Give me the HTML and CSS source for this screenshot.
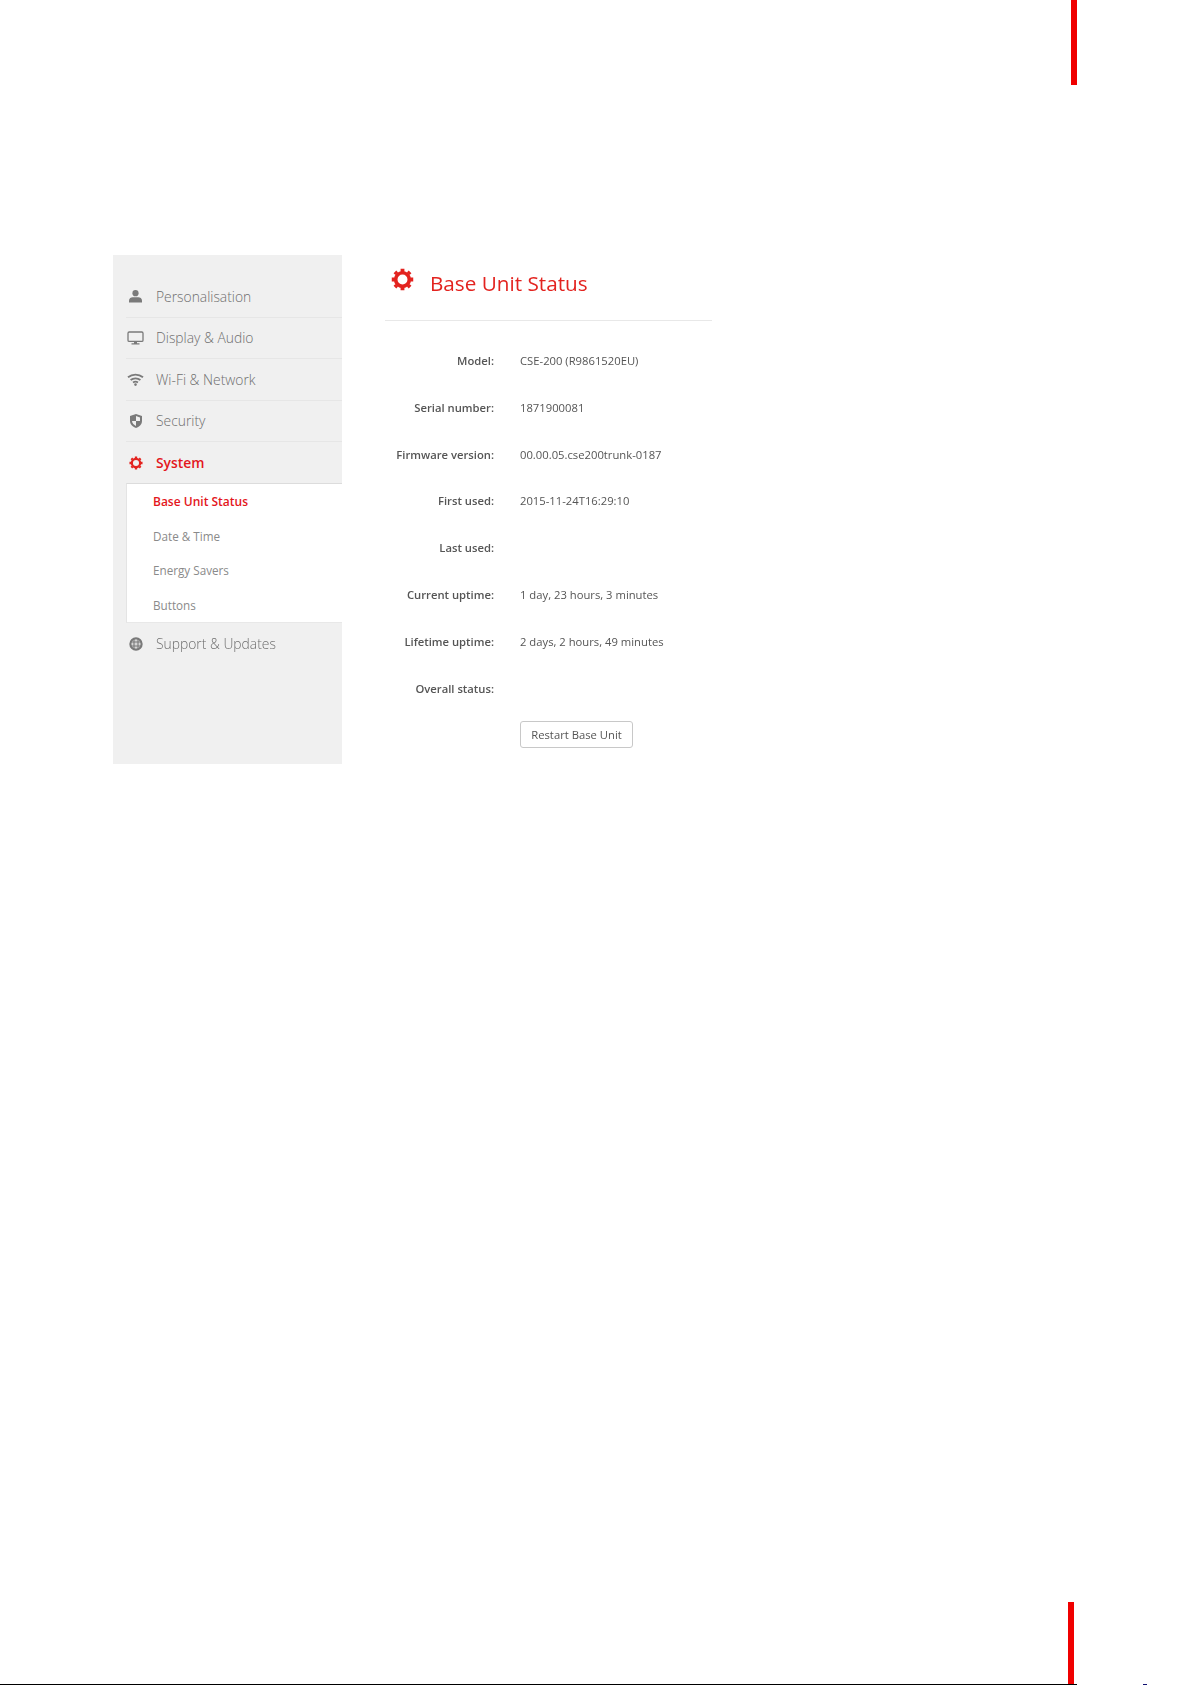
FILE: index.html
```html
<!DOCTYPE html>
<html lang="en">
<head>
<meta charset="utf-8">
<title>Base Unit Status</title>
<link rel="stylesheet" href="styles.css">
</head>
<body>
<div class="page">
  <div class="bar bar-top"></div>
  <div class="shot">
    <nav class="side">
      <a class="item">
        <span class="ico"><svg width="13" height="13" viewBox="0 0 13 13"><circle cx="6.5" cy="3.2" r="3.1"/><path d="M0 12.6V10.6C0 8.3 2 7.2 3.6 7.2H9.4C11 7.2 13 8.3 13 10.6V12.6Z"/></svg></span>
        Personalisation
      </a>
      <a class="item">
        <span class="ico"><svg width="17" height="14" viewBox="0 0 17 14"><rect class="line" x="1" y="1" width="15" height="9.4" rx="1.2"/><path d="M7 10.5H10V12.2H12.5V13.4H4.5V12.2H7Z"/></svg></span>
        Display &amp; Audio
      </a>
      <a class="item">
        <span class="ico"><svg width="17" height="13" viewBox="0 0 17 13"><path class="line wide" d="M1 4.3C5.3 .6 11.7 .6 16 4.3"/><path class="line wide" d="M3.6 7C6.4 4.7 10.6 4.7 13.4 7"/><path class="line wide" d="M6 9.5C7.5 8.5 9.5 8.5 11 9.5"/><circle cx="8.5" cy="11.6" r="1.3"/></svg></span>
        Wi-Fi &amp; Network
      </a>
      <a class="item">
        <span class="ico"><svg width="12" height="14" viewBox="0 0 12 14"><path d="M6 0L12 2V7C12 10.5 9 13 6 14C3 13 0 10.5 0 7V2Z"/><path class="fill-bg" d="M6 2V7H2C2 9.2 4 11 6 12V7H10V3.4Z"/></svg></span>
        Security
      </a>
      <a class="item item-on">
        <span class="ico"><svg width="14" height="14" viewBox="0 0 24 24"><circle class="cog-ring" cx="12" cy="12" r="7.1"/><path class="cog" d="M12 .8V5M12 19V23.2M.8 12H5M19 12H23.2M4.1 4.1L6 6M18 18L19.9 19.9M19.9 4.1L18 6M6 18L4.1 19.9"/></svg></span>
        System
      </a>
      <div class="sub">
        <a class="sub-item sub-on">Base Unit Status</a>
        <a class="sub-item">Date &amp; Time</a>
        <a class="sub-item">Energy Savers</a>
        <a class="sub-item">Buttons</a>
      </div>
      <a class="item item-last">
        <span class="ico"><svg width="14" height="14" viewBox="0 0 14 14"><circle class="ring-fill" cx="7" cy="7" r="4"/><circle class="ring" cx="7" cy="7" r="5.6"/><path class="spokes" d="M5 1.4V12.6M9 1.4V12.6M1.4 5H12.6M1.4 9H12.6"/></svg></span>
        Support &amp; Updates
      </a>
    </nav>
    <main class="main">
      <h1 class="title">
        <svg class="title-ico" width="23" height="23" viewBox="0 0 24 24"><circle class="cog-ring" cx="12" cy="12" r="7.1"/><path class="cog" d="M12 .8V5M12 19V23.2M.8 12H5M19 12H23.2M4.1 4.1L6 6M18 18L19.9 19.9M19.9 4.1L18 6M6 18L4.1 19.9"/></svg>
        Base Unit Status
      </h1>
      <dl class="info">
        <dt>Model:</dt><dd>CSE-200 (R9861520EU)</dd>
        <dt>Serial number:</dt><dd>1871900081</dd>
        <dt>Firmware version:</dt><dd>00.00.05.cse200trunk-0187</dd>
        <dt>First used:</dt><dd>2015-11-24T16:29:10</dd>
        <dt>Last used:</dt><dd></dd>
        <dt>Current uptime:</dt><dd>1 day, 23 hours, 3 minutes</dd>
        <dt>Lifetime uptime:</dt><dd>2 days, 2 hours, 49 minutes</dd>
        <dt>Overall status:</dt><dd></dd>
        <dt></dt><dd><button class="btn" type="button">Restart Base Unit</button></dd>
      </dl>
    </main>
  </div>
  <div class="foot">
    <div class="bar bar-bottom"></div>
    <div class="rule"><span class="rule-line"></span><span class="rule-mark"></span></div>
  </div>
</div>
</body>
</html>
```
FILE: styles.css
```css
html, body { margin: 0; padding: 0; background: #fff; }
.page {
  height: 1685px;
  display: flex;
  flex-direction: column;
  font-family: "Open Sans", "Liberation Sans", sans-serif;
  overflow: hidden;
}
.bar { width: 6px; background: #f00000; }
.bar-top { height: 85px; margin-left: 1071px; }
.shot {
  display: flex;
  margin: 170px 0 0 113px;
  gap: 43px;
  height: 509px;
  filter: blur(0.3px);
}
.side {
  width: 229px;
  background: #f0f0f0;
  padding-top: 21px;
  box-sizing: border-box;
  display: flex;
  flex-direction: column;
}
.item {
  margin-left: 13px;
  height: 41.5px;
  flex: none;
  box-sizing: border-box;
  display: flex;
  align-items: center;
  border-bottom: 1px solid #e6e6e6;
  font-size: 13.85px;
  font-weight: 300;
  color: #6e6e6e;
}
.item-on { color: #e3161c; font-weight: 600; border-bottom: 0; height: 41px; }
.item-last { border-bottom: 0; }
.ico {
  width: 19px;
  margin-right: 11px;
  display: flex;
  justify-content: center;
  fill: #7a7a7a;
}
.line { fill: none; stroke: #7a7a7a; stroke-width: 1.3; }
.wide { stroke-width: 1.8; }
.fill-bg { fill: #f0f0f0; }
.ring { fill: none; stroke: #7a7a7a; stroke-width: 2.2; }
.ring-fill { fill: #d4d4d4; }
.spokes { fill: none; stroke: #7a7a7a; stroke-width: 1.1; }
.cog-ring { fill: none; stroke: #e3231f; stroke-width: 3.8; }
.cog { fill: none; stroke: #e3231f; stroke-width: 4; }
.sub {
  margin-left: 13px;
  background: #fff;
  border-top: 1px solid #dcdcdc;
  border-left: 1px solid #e4e4e4;
  border-bottom: 1px solid #e8e8e8;
  height: 140px;
  flex: none;
  box-sizing: border-box;
  padding-left: 26px;
}
.sub-item {
  height: 34.5px;
  display: flex;
  align-items: center;
  font-size: 11.7px;
  color: #8a8a8a;
}
.sub-on { color: #e3161c; font-size: 12px; font-weight: 600; }
.main { width: 327px; }
.title {
  margin: 0;
  height: 66px;
  box-sizing: border-box;
  padding: 13px 0 0 6px;
  border-bottom: 1px solid #e8e8e8;
  display: flex;
  align-items: flex-start;
  gap: 16px;
  font-size: 20.7px;
  line-height: 31px;
  font-weight: 400;
  color: #e3231f;
}
.title-ico { flex: none; }
.info {
  margin: 16px 0 0;
  display: grid;
  grid-template-columns: 109px 1fr;
  column-gap: 26px;
  grid-auto-rows: 46.85px;
  align-items: center;
  font-size: 11.25px;
  color: #555;
}
.info dt { text-align: right; font-weight: 600; }
.info dd { margin: 0; }
.btn {
  display: block;
  width: 113px;
  height: 27px;
  margin-bottom: 1px;
  padding: 0;
  background: #fff;
  border: 1px solid #c8c8c8;
  border-radius: 3px;
  font: 11.25px "Open Sans", "Liberation Sans", sans-serif;
  color: #555;
}
.foot { margin-top: auto; }
.bar-bottom { height: 82px; margin-left: 1068px; }
.rule { display: flex; height: 1px; }
.rule-line { width: 1077px; background: #000; }
.rule-mark { width: 4px; margin-left: 66px; background: #101070; }
```
